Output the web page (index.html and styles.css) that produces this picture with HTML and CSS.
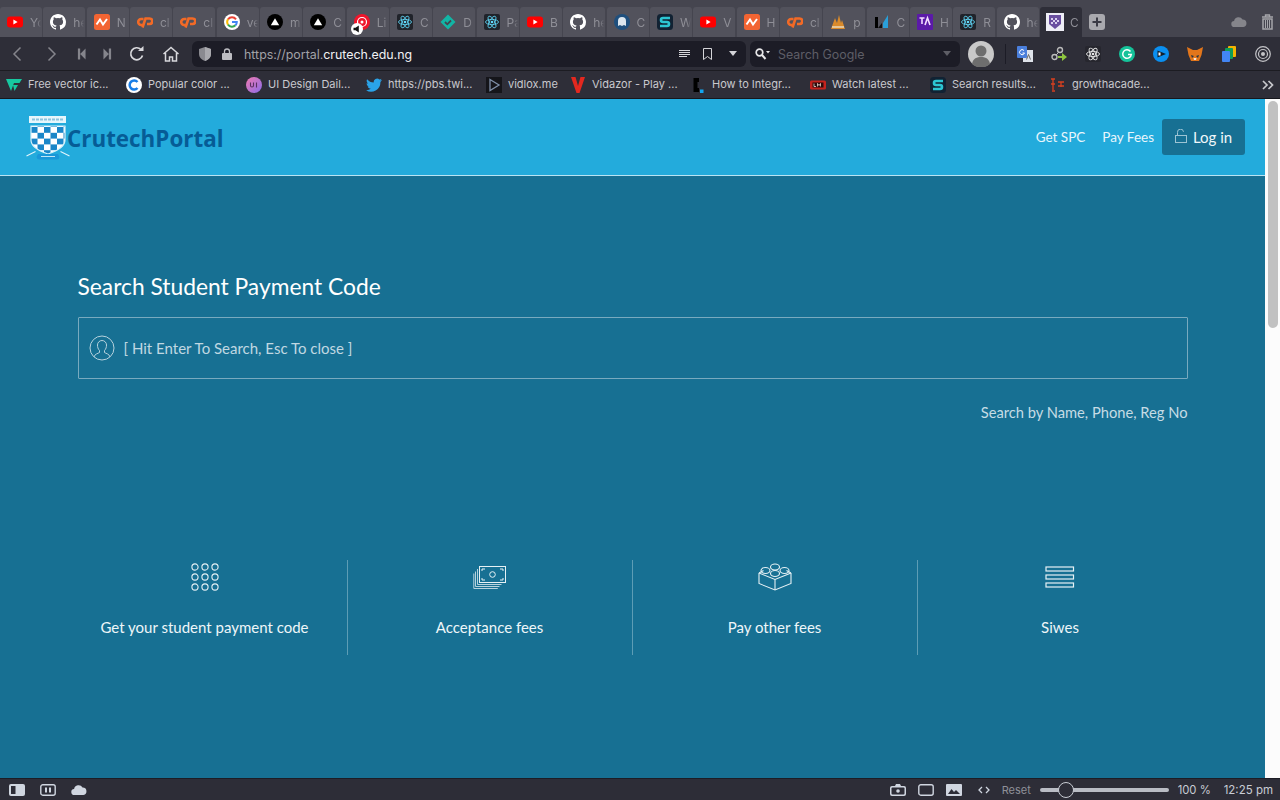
FILE: index.html
```html
<!DOCTYPE html>
<html lang="en">
<head>
    <meta charset="UTF-8">
    <meta name="viewport" content="width=device-width, initial-scale=1.0">
    <title>Crutech Portal</title>
    <link rel="stylesheet" href="styles.css">
</head>
<body>

    <!-- Shared favicon drawings -->
    <svg class="sprites" width="0" height="0">
        <symbol id="yt" viewBox="0 0 16 16"><rect y="2.5" width="16" height="11" rx="3" fill="#f00"/><path d="M6.4 5.5l4.2 2.5-4.2 2.5z" fill="#fff"/></symbol>
        <symbol id="gh" viewBox="0 0 16 16"><path fill-rule="evenodd" fill="#fff" d="M8 0C3.58 0 0 3.58 0 8c0 3.54 2.29 6.53 5.47 7.59.4.07.55-.17.55-.38v-1.34c-2.23.48-2.7-1.07-2.7-1.07-.36-.93-.89-1.17-.89-1.17-.73-.5.05-.49.05-.49.8.06 1.23.83 1.23.83.71 1.23 1.87.87 2.33.66.07-.52.28-.87.51-1.07-1.78-.2-3.64-.89-3.64-3.95 0-.87.31-1.59.82-2.15-.08-.2-.36-1.02.08-2.12 0 0 .67-.21 2.2.82a7.6 7.6 0 0 1 4 0c1.53-1.04 2.2-.82 2.2-.82.44 1.1.16 1.92.08 2.12.51.56.82 1.27.82 2.15 0 3.07-1.87 3.75-3.65 3.95.29.25.54.73.54 1.48v2.2c0 .21.15.46.55.38A8 8 0 0 0 16 8c0-4.42-3.58-8-8-8z"/></symbol>
        <symbol id="nw" viewBox="0 0 16 16"><rect width="16" height="16" rx="2.5" fill="#f26432"/><path d="M2.5 10.500L6 5.500l3 5 4-5.500" fill="none" stroke="#fff" stroke-width="2"/></symbol>
        <symbol id="cp" viewBox="0 0 16 16"><path d="M6.500 5H4.200a3 3 0 0 0 0 6h1.500" fill="none" stroke="#f26a26" stroke-width="2.600"/><path d="M5.500 13.500L8.500 4.500h4a2.700 2.700 0 0 1 0 5.500H10" fill="none" stroke="#f26a26" stroke-width="2.600"/></symbol>
        <symbol id="google" viewBox="0 0 16 16"><circle cx="8" cy="8" r="8" fill="#fff"/><path d="M12 5.300A5 5 0 0 0 4 5.300" fill="none" stroke="#ea4335" stroke-width="2"/><path d="M4 5.300a5 5 0 0 0 0 5.400" fill="none" stroke="#fbbc05" stroke-width="2"/><path d="M4 10.700a5 5 0 0 0 7.500.6" fill="none" stroke="#34a853" stroke-width="2"/><path d="M8 8h4.800a5 5 0 0 1-1.300 3.300" fill="none" stroke="#4285f4" stroke-width="2"/></symbol>
        <symbol id="vercel" viewBox="0 0 16 16"><circle cx="8" cy="8" r="8" fill="#000"/><path d="M8 4.300l4.200 7H3.800z" fill="#fff"/></symbol>
        <symbol id="react" viewBox="0 0 16 16"><rect width="16" height="16" rx="2" fill="#20232a"/><g fill="none" stroke="#61dafb" stroke-width=".8"><ellipse cx="8" cy="8" rx="6.500" ry="2.600"/><ellipse cx="8" cy="8" rx="6.500" ry="2.600" transform="rotate(60 8 8)"/><ellipse cx="8" cy="8" rx="6.500" ry="2.600" transform="rotate(120 8 8)"/></g><circle cx="8" cy="8" r="1.300" fill="#61dafb"/></symbol>
        <symbol id="sflix" viewBox="0 0 16 16"><rect width="16" height="16" rx="3.500" fill="#123"/><path d="M13 4H6a2 2 0 0 0 0 4h4a2 2 0 0 1 0 4H3" fill="none" stroke="#2cc5d2" stroke-width="2.600"/></symbol>
    </svg>

    <!-- Browser tabs -->
    <div class="tabbar">
        <div class="tab"><svg class="fav"><use href="#yt"/></svg><span>Yo</span></div>
        <div class="tab"><svg class="fav"><use href="#gh"/></svg><span>he</span></div>
        <div class="tab"><svg class="fav"><use href="#nw"/></svg><span>N</span></div>
        <div class="tab"><svg class="fav"><use href="#cp"/></svg><span>cl</span></div>
        <div class="tab"><svg class="fav"><use href="#cp"/></svg><span>cl</span></div>
        <div class="tab"><svg class="fav"><use href="#google"/></svg><span>ve</span></div>
        <div class="tab"><svg class="fav"><use href="#vercel"/></svg><span>m</span></div>
        <div class="tab"><svg class="fav"><use href="#vercel"/></svg><span>C</span></div>
        <div class="tab">
            <svg class="fav" viewBox="0 0 16 16"><circle cx="8" cy="8" r="8" fill="#f0152b"/><circle cx="8" cy="8" r="4.500" fill="none" stroke="#fff" stroke-width="1.200"/><circle cx="8" cy="8" r="1.500" fill="#fff"/></svg>
            <span>Li</span>
            <svg class="muted" viewBox="0 0 12 12"><circle cx="6" cy="6" r="6" fill="#fff"/><path d="M2.500 4.800h2L7.800 2.500v7L4.500 7.200h-2z" fill="#111"/></svg>
        </div>
        <div class="tab"><svg class="fav"><use href="#react"/></svg><span>C</span></div>
        <div class="tab"><svg class="fav" viewBox="0 0 16 16"><path d="M8 .5L15.500 8 8 15.500.5 8z" fill="#12b5a5"/><path d="M5 8l2.300 2.300L11 6.500" fill="none" stroke="#45454f" stroke-width="1.800"/></svg><span>D</span></div>
        <div class="tab"><svg class="fav"><use href="#react"/></svg><span>Pa</span></div>
        <div class="tab"><svg class="fav"><use href="#yt"/></svg><span>B</span></div>
        <div class="tab"><svg class="fav"><use href="#gh"/></svg><span>he</span></div>
        <div class="tab"><svg class="fav" viewBox="0 0 16 16"><circle cx="8" cy="8" r="8" fill="#1f4f7d"/><path d="M4 12V7a4 4 0 0 1 8 0v5l-2-1-2 1-2-1z" fill="#dce6ee"/></svg><span>C</span></div>
        <div class="tab"><svg class="fav"><use href="#sflix"/></svg><span>W</span></div>
        <div class="tab"><svg class="fav"><use href="#yt"/></svg><span>V</span></div>
        <div class="tab"><svg class="fav"><use href="#nw"/></svg><span>H</span></div>
        <div class="tab"><svg class="fav"><use href="#cp"/></svg><span>cl</span></div>
        <div class="tab"><svg class="fav" viewBox="0 0 16 16"><path d="M1 15L5 4l2 5 2-8 2 8 1-3 3 9z" fill="#d98a2b"/><path d="M2 13h12" stroke="#e8d9bd" stroke-width="1.500"/></svg><span>p</span></div>
        <div class="tab"><svg class="fav" viewBox="0 0 16 16"><path d="M1 3h3v11H1z" fill="#000"/><path d="M4 14l4-5v5z" fill="#111"/><path d="M9 9l5-8v13H9z" fill="#2a9fd8"/></svg><span>C</span></div>
        <div class="tab"><svg class="fav" viewBox="0 0 16 16"><rect width="16" height="16" rx="1" fill="#5b1aa8"/><path d="M2.500 4h5M5 4v6M8 11l2.500-7L13 11" fill="none" stroke="#f3dcff" stroke-width="1.600"/></svg><span>H</span></div>
        <div class="tab"><svg class="fav"><use href="#react"/></svg><span>R</span></div>
        <div class="tab"><svg class="fav"><use href="#gh"/></svg><span>he</span></div>
        <div class="tab tab-active">
            <svg class="fav fav-large" viewBox="0 0 18 18"><rect width="18" height="18" fill="#eeeef6"/><path d="M3 2h12v9l-6 5-6-5z" fill="#6a4fa0"/><path d="M5 5h2v2H5zm4 0h2v2H9zM7 7h2v2H7zm4 0h2v2h-2zM5 9h2v2H5zm4 0h2v2H9z" fill="#d9d0ee"/></svg>
            <span>C</span>
        </div>
        <div class="new-tab"><svg viewBox="0 0 16 16"><rect width="16" height="16" rx="3" fill="#a9a9ae"/><path d="M8 3.500v9M3.500 8h9" stroke="#3b3b45" stroke-width="2"/></svg></div>
        <div class="tabbar-end">
            <svg class="cloud" viewBox="0 0 16 10"><path d="M3.500 10a3 3 0 0 1-.4-6A4.500 4.500 0 0 1 11.500 2.500 3.800 3.800 0 0 1 12.500 10z" fill="#85858b"/></svg>
            <svg class="trash" viewBox="0 0 13 16"><path d="M1 3h11M4.500 3V1h4v2" fill="none" stroke="#a5a5aa" stroke-width="1.400"/><path d="M2 5h9v10H2z" fill="none" stroke="#a5a5aa" stroke-width="1.500"/><path d="M4.500 6v8M6.500 6v8M8.500 6v8" stroke="#a5a5aa"/></svg>
        </div>
    </div>

    <!-- Browser toolbar -->
    <div class="toolbar">
        <div class="nav-buttons">
            <svg class="nav-icon nav-dim nav-back" viewBox="0 0 12 16"><path d="M9.500 1.500L3 8l6.500 6.500" fill="none" stroke="currentColor" stroke-width="1.500"/></svg>
            <svg class="nav-icon nav-dim nav-forward" viewBox="0 0 12 16"><path d="M2.500 1.500L9 8l-6.500 6.500" fill="none" stroke="currentColor" stroke-width="1.500"/></svg>
            <svg class="nav-icon nav-dim nav-skip" viewBox="0 0 10 12"><path d="M1 0h2.500v12H1zM9.500 0v12L3.500 6z" fill="currentColor"/></svg>
            <svg class="nav-icon nav-dim nav-skip" viewBox="0 0 10 12"><path d="M9 0H6.500v12H9zM.5 0v12l6-6z" fill="currentColor"/></svg>
            <svg class="nav-icon nav-reload" viewBox="0 0 16 16"><path d="M13.500 9.500A6 6 0 1 1 12 3.500" fill="none" stroke="currentColor" stroke-width="1.700"/><path d="M9 5h5.500V0z" fill="currentColor"/></svg>
            <svg class="nav-icon nav-home" viewBox="0 0 18 16"><path d="M1.500 8L9 1.500 16.500 8M3.500 7v8h4v-4h3v4h4V7" fill="none" stroke="currentColor" stroke-width="1.500"/></svg>
        </div>
        <div class="urlbar">
            <svg class="shield" viewBox="0 0 12 14"><path d="M6 0l6 2v5c0 3.500-3 6-6 7-3-1-6-3.500-6-7V2z" fill="#8a8a90"/><path d="M6 0l6 2v5c0 3.500-3 6-6 7z" fill="#a9a9ae"/></svg>
            <svg class="lock" viewBox="0 0 10 12"><path d="M2.500 5V3.500a2.500 2.500 0 0 1 5 0V5" fill="none" stroke="#bdbdc2" stroke-width="1.300"/><rect y="5" width="10" height="7" rx="1" fill="#bdbdc2"/></svg>
            <span class="url">https://portal.<b>crutech.edu.ng</b></span>
            <svg class="reader" viewBox="0 0 11 8"><path d="M0 .5h11M0 2.500h11M0 4.500h11M0 6.500h8" stroke="#d5d5d9"/></svg>
            <svg class="bookmark" viewBox="0 0 9 12"><path d="M.5.500h8v11l-4-3-4 3z" fill="none" stroke="#d5d5d9"/></svg>
            <span class="caret"></span>
        </div>
        <div class="searchbar">
            <svg class="search-glass" viewBox="0 0 15 12"><circle cx="4.500" cy="4.500" r="3.300" fill="none" stroke="#e8e8ea" stroke-width="1.700"/><path d="M7 7l3.500 4" stroke="#e8e8ea" stroke-width="2"/><path d="M11 3h4l-2 2.500z" fill="#e8e8ea"/></svg>
            <span class="search-text">Search Google</span>
            <span class="caret caret-dim"></span>
        </div>
        <div class="avatar"><svg viewBox="0 0 26 26"><circle cx="13" cy="13" r="13" fill="#c9c9c9"/><circle cx="13" cy="10" r="5.500" fill="#6e6e6e"/><path d="M4 23c1-6 5-7 9-7s8 1 9 7a13 13 0 0 1-18 0z" fill="#6e6e6e"/></svg></div>
        <div class="tool-sep"></div>
        <div class="extensions">
            <svg class="ext" viewBox="0 0 16 16"><rect x="6" y="4" width="10" height="12" fill="#dfe3ea"/><rect width="10" height="12" rx="1" fill="#4a7fdc"/><path d="M7 4.500A2.500 2.500 0 1 0 7.500 7H5.500" fill="none" stroke="#fff"/><path d="M9.500 13.500l2-5 2 5" fill="none" stroke="#666"/></svg>
            <svg class="ext" viewBox="0 0 16 16"><circle cx="9" cy="4" r="2.500" fill="none" stroke="#bbb" stroke-width="1.400"/><circle cx="3.500" cy="11" r="2.500" fill="none" stroke="#bbb" stroke-width="1.400"/><path d="M5 9l3-3" stroke="#bbb"/><path d="M7 10h4V7l5 4-5 4v-3H7z" fill="#8ec63f"/></svg>
            <svg class="ext" viewBox="0 0 16 16"><rect width="16" height="16" rx="2" fill="#26262e"/><g fill="none" stroke="#e6e6e6" stroke-width=".9"><ellipse cx="8" cy="8" rx="6.500" ry="2.600"/><ellipse cx="8" cy="8" rx="6.500" ry="2.600" transform="rotate(60 8 8)"/><ellipse cx="8" cy="8" rx="6.500" ry="2.600" transform="rotate(120 8 8)"/></g><circle cx="8" cy="8" r="1.300" fill="#e6e6e6"/></svg>
            <svg class="ext" viewBox="0 0 16 16"><circle cx="8" cy="8" r="8" fill="#15c39a"/><path d="M11.500 5.500A4.300 4.300 0 1 0 12.300 8.500H9" fill="none" stroke="#fff" stroke-width="1.500"/></svg>
            <svg class="ext" viewBox="0 0 16 16"><circle cx="8" cy="8" r="8" fill="#0a8ff0"/><path d="M4.500 4.500L13 8l-8.500 3.500z" fill="#12202c"/><path d="M5.500 6.500h2v3h-2z" fill="#fff"/></svg>
            <svg class="ext" viewBox="0 0 16 16"><path d="M0 1l6 3h4l6-3-1.500 8L12 15H4L1.500 9z" fill="#e2761b"/><path d="M4 9l3 1-2 2zM12 9l-3 1 2 2z" fill="#233447"/><path d="M6.500 12h3l-.5 2H7z" fill="#f5e3d3"/></svg>
            <svg class="ext" viewBox="0 0 16 16"><rect x="7" y="0" width="8" height="11" rx="1" fill="#f4b400"/><rect x="4" y="2" width="8" height="11" rx="1" fill="#0f9d58"/><rect x="1" y="5" width="8" height="11" rx="1" fill="#4285f4"/></svg>
            <svg class="ext" viewBox="0 0 16 16"><circle cx="8" cy="8" r="7.300" fill="none" stroke="#c4c4c8" stroke-width="1.200"/><circle cx="8" cy="8" r="4.500" fill="none" stroke="#c4c4c8" stroke-width="1.200"/><circle cx="8" cy="8" r="2" fill="#c4c4c8"/></svg>
        </div>
    </div>

    <!-- Bookmarks -->
    <div class="bookmarks">
        <div class="bm"><svg class="bm-icon" viewBox="0 0 16 16"><path d="M0 2h16l-2.500 4H8l-3 8z" fill="#17c7a0"/><path d="M7 8h5l-3.500 6z" fill="#17c7a0"/></svg><span>Free vector ic...</span></div>
        <div class="bm"><svg class="bm-icon" viewBox="0 0 16 16"><circle cx="8" cy="8" r="8" fill="#fff"/><path d="M11.500 5A4.500 4.500 0 1 0 11.500 11" fill="none" stroke="#1a7ee6" stroke-width="2.500"/></svg><span>Popular color ...</span></div>
        <div class="bm"><svg class="bm-icon" viewBox="0 0 16 16"><defs><linearGradient id="uiGrad" x1="0" y1="0" x2="1" y2="1"><stop offset="0" stop-color="#f07ab0"/><stop offset="1" stop-color="#8a6ce8"/></linearGradient></defs><circle cx="8" cy="8" r="8" fill="url(#uiGrad)"/><path d="M4.500 5.500v3a1.500 1.500 0 0 0 3 0v-3M10.500 5.500v5" fill="none" stroke="#5a3060" stroke-width="1.100"/></svg><span>UI Design Dail...</span></div>
        <div class="bm"><svg class="bm-icon" viewBox="0 0 16 16"><path d="M16 3.100c-.6.300-1.200.4-1.900.5.700-.4 1.200-1 1.400-1.800-.6.400-1.300.7-2.100.8A3.300 3.300 0 0 0 7.800 5.600C5.100 5.500 2.700 4.200 1.100 2.200c-.9 1.500-.4 3.400 1 4.400-.5 0-1-.2-1.500-.4 0 1.600 1.100 3 2.600 3.300-.5.100-1 .1-1.500 0 .4 1.300 1.600 2.200 3.100 2.300A6.600 6.600 0 0 1 0 13.200 9.300 9.300 0 0 0 14.400 5c.6-.5 1.200-1.100 1.600-1.900z" fill="#2aa3e8"/></svg><span>https://pbs.twi...</span></div>
        <div class="bm bm-short"><svg class="bm-icon" viewBox="0 0 16 16"><rect width="16" height="16" fill="#15151a"/><path d="M4 2.500l9 5.500-9 5.500z" fill="none" stroke="#7f8fa8" stroke-width="1.300"/></svg><span>vidlox.me</span></div>
        <div class="bm"><svg class="bm-icon" viewBox="0 0 16 16"><path d="M1 0h4.500L8 9l2.500-9H15L9.500 16h-3z" fill="#e3281f"/></svg><span>Vidazor - Play ...</span></div>
        <div class="bm"><svg class="bm-icon" viewBox="0 0 16 16"><path d="M9 3H5.500v10H9" fill="none" stroke="#000" stroke-width="4"/><rect x="10" y="12.500" width="3.500" height="3.500" fill="#12a5ef"/></svg><span>How to Integr...</span></div>
        <div class="bm"><svg class="bm-icon" viewBox="0 0 16 16"><rect y="3.500" width="16" height="9" rx="1.500" fill="#c4231d"/><rect x="2.500" y="5.500" width="11" height="5" fill="#2a0c0c"/><path d="M4 6.500v3h2M7.500 9.500v-3l1.500 2 1.500-2v3" fill="none" stroke="#f2d9d0" stroke-width=".8"/></svg><span>Watch latest ...</span></div>
        <div class="bm"><svg class="bm-icon"><use href="#sflix"/></svg><span>Search results...</span></div>
        <div class="bm"><svg class="bm-icon" viewBox="0 0 16 16"><path d="M3 2v11M1 2h4M1 7h4M2 14h3M8 5h6M8 9h6M11 5v5" fill="none" stroke="#d6401f" stroke-width="1.300"/></svg><span>growthacade...</span></div>
        <svg class="bm-more" viewBox="0 0 12 10"><path d="M1 1l4 4-4 4M6.500 1l4 4-4 4" fill="none" stroke="#c8c8cc" stroke-width="1.700"/></svg>
    </div>

    <!-- Page -->
    <div class="viewport">
        <div class="page">
            <header class="site-header">
                <a class="brand">
                    <svg class="crest" viewBox="0 0 44 45">
                        <defs>
                            <pattern id="checks" width="13" height="11.600" patternUnits="userSpaceOnUse" x="5" y="12">
                                <rect width="13" height="11.600" fill="#1a86c8"/>
                                <rect x="6.500" width="6.500" height="5.800" fill="#fff"/>
                                <rect y="5.800" width="6.500" height="5.800" fill="#fff"/>
                            </pattern>
                        </defs>
                        <rect x="3" y="1" width="37" height="7" fill="#e6f6fc"/>
                        <path d="M6 4.500h31" stroke="#8dc3de" stroke-width="2" stroke-dasharray="3 1"/>
                        <path d="M5 11h34v14c0 7-8 11-17 14C13 36 5 32 5 25z" fill="url(#checks)" stroke="#d5f1fb" stroke-width="1.200"/>
                        <path d="M0.500 41l9-4.500M43.500 41l-9-4.500" stroke="#e0f5fc" stroke-width="1.200"/>
                        <path d="M12 39h20l1.500 3a3 3 0 0 1-3 2.500H13.500A3 3 0 0 1 10.500 42z" fill="#1a97d8"/>
                        <path d="M15 41.500h14" stroke="#bfe6f6" stroke-width="1"/>
                    </svg>
                    <span class="brand-name">CrutechPortal</span>
                </a>
                <nav class="site-nav">
                    <a class="nav-link">Get SPC</a>
                    <a class="nav-link">Pay Fees</a>
                    <a class="login-btn">
                        <svg viewBox="0 0 12 14"><path d="M2.500 6V3.500a3 3 0 0 1 6-.7" fill="none" stroke="#9cc3d3"/><rect x=".5" y="6.500" width="11" height="7" fill="none" stroke="#9cc3d3"/></svg>
                        Log in
                    </a>
                </nav>
            </header>

            <main class="content">
                <h1 class="search-title">Search Student Payment Code</h1>
                <div class="search-box">
                    <svg class="user-icon" viewBox="0 0 26 26"><circle cx="13" cy="13" r="12" fill="none" stroke="#b6d2dd"/><path d="M5 22c.5-3 4-3.500 5.500-4.500v-2C9 14 8.500 12 8.500 10a4.500 4.500 0 0 1 9 0c0 2-.5 4-2 5.500v2C17 18.500 20.500 19 21 22" fill="none" stroke="#b6d2dd"/></svg>
                    <span class="search-placeholder">[ Hit Enter To Search, Esc To close ]</span>
                </div>
                <p class="search-hint">Search by Name, Phone, Reg No</p>

                <section class="features">
                    <div class="feature">
                        <svg class="feature-icon" viewBox="0 0 28 28"><g fill="none" stroke="#e6f1f5" stroke-width="1.100"><circle cx="4" cy="4" r="3.100"/><circle cx="14" cy="4" r="3.100"/><circle cx="24" cy="4" r="3.100"/><circle cx="4" cy="14" r="3.100"/><circle cx="14" cy="14" r="3.100"/><circle cx="24" cy="14" r="3.100"/><circle cx="4" cy="24" r="3.100"/><circle cx="14" cy="24" r="3.100"/><circle cx="24" cy="24" r="3.100"/></g></svg>
                        <span>Get your student payment code</span>
                    </div>
                    <div class="feature">
                        <svg class="feature-icon feature-wide" viewBox="0 0 34 24"><g fill="none" stroke="#e6f1f5"><rect x="6.500" y="1.500" width="26" height="16"/><path d="M9 6V4h3M27 4h3v2M9 13v2h3M27 15h3v-2"/><circle cx="19.500" cy="9.500" r="2.800"/></g><path d="M4.500 4v15.500h24M2.500 6.500v15h24M.8 8.500v15h24" fill="none" stroke="#b6d2dd"/></svg>
                        <span>Acceptance fees</span>
                    </div>
                    <div class="feature">
                        <svg class="feature-icon feature-wide" viewBox="0 0 34 28"><g fill="none" stroke="#e6f1f5" stroke-width="1.100"><path d="M1 10v10.500L17 27l16-6.500V10"/><path d="M1 10l16 6.500L33 10"/><path d="M17 16.500V27"/><path d="M1 10l4.500-2.500M33 10l-4.500-2.500"/><ellipse cx="17" cy="4" rx="4.500" ry="3"/><ellipse cx="7.500" cy="7.500" rx="4.500" ry="3"/><ellipse cx="26.500" cy="7.500" rx="4.500" ry="3"/><ellipse cx="17" cy="10.500" rx="4.500" ry="3"/></g></svg>
                        <span>Pay other fees</span>
                    </div>
                    <div class="feature">
                        <svg class="feature-icon feature-list" viewBox="0 0 30 24"><g fill="none" stroke="#e6f1f5" stroke-width="1.200"><rect x="1" y="2" width="27.500" height="4"/><rect x="1" y="10" width="27.500" height="4"/><rect x="1" y="18" width="27.500" height="4"/></g></svg>
                        <span>Siwes</span>
                    </div>
                </section>
            </main>
        </div>
        <div class="scrollbar"><div class="scroll-thumb"></div></div>
    </div>

    <!-- Browser status bar -->
    <div class="statusbar">
        <div class="status-left">
            <svg viewBox="0 0 16 12"><rect width="16" height="12" rx="2" fill="#d0d6e0"/><rect x="2" y="2" width="4.500" height="8" fill="#2d2d37"/></svg>
            <svg viewBox="0 0 16 12"><rect x=".8" y=".8" width="14.400" height="10.400" rx="2" fill="none" stroke="#d0d6e0" stroke-width="1.400"/><path d="M6 3.500v5M10 3.500v5" stroke="#d0d6e0" stroke-width="2"/></svg>
            <svg viewBox="0 0 16 10"><path d="M3.500 10a3 3 0 0 1-.4-6A4.500 4.500 0 0 1 11.500 2.500 3.800 3.800 0 0 1 12.500 10z" fill="#d0d6e0"/></svg>
        </div>
        <div class="status-right">
            <svg class="st-icon" viewBox="0 0 16 12"><path d="M5 2l1-2h4l1 2h3a2 2 0 0 1 2 2v6a2 2 0 0 1-2 2H2a2 2 0 0 1-2-2V4a2 2 0 0 1 2-2z" fill="#d0d6e0"/><rect x="1.500" y="3.500" width="13" height="7" rx="1" fill="#2d2d37"/><circle cx="8" cy="7" r="1.800" fill="#d0d6e0"/></svg>
            <svg class="st-icon" viewBox="0 0 16 12"><rect x=".8" y=".8" width="14.400" height="10.400" rx="2" fill="none" stroke="#d0d6e0" stroke-width="1.400"/></svg>
            <svg class="st-icon" viewBox="0 0 16 12"><rect width="16" height="12" rx="1" fill="#d0d6e0"/><path d="M2 10l3.500-5 2.500 3 2-2 4 4z" fill="#2d2d37"/></svg>
            <svg class="st-code" viewBox="0 0 12 8"><path d="M4 1L1 4l3 3M8 1l3 3-3 3" fill="none" stroke="#d0d6e0" stroke-width="1.300"/></svg>
            <span class="st-reset">Reset</span>
            <div class="zoom-slider"><div class="zoom-knob"></div></div>
            <span class="st-zoom">100 %</span>
            <span class="st-time">12:25 pm</span>
        </div>
    </div>

</body>
</html>
```

FILE: styles.css
```css
* {
    box-sizing: border-box;
}
html, body {
    height: 100%;
}
body {
    margin: 0;
    height: 800px;
    overflow: hidden;
    display: flex;
    flex-direction: column;
    font-family: Inter, "Liberation Sans", sans-serif;
    background-color: #2d2d37;
}
.sprites {
    position: absolute;
}

/* tabs */
.tabbar {
    height: 37px;
    padding-top: 7px;
    display: flex;
    gap: 1.33px;
    background-color: #45454f;
}
.tab {
    position: relative;
    width: 42px;
    height: 30px;
    flex-shrink: 0;
    padding-left: 7px;
    display: flex;
    align-items: center;
    gap: 7px;
    overflow: hidden;
    border-radius: 3px 3px 0 0;
    background-color: #52525c;
    font-size: 12px;
    color: #8f8f97;
}
.tab span {
    width: 11px;
    overflow: hidden;
    white-space: nowrap;
    -webkit-mask-image: linear-gradient(to right, #000 60%, transparent);
    mask-image: linear-gradient(to right, #000 60%, transparent);
}
.tab-active {
    background-color: #2e2e38;
}
.fav {
    width: 16px;
    height: 16px;
    flex-shrink: 0;
}
.fav-large {
    width: 18px;
    height: 18px;
    margin-left: -1px;
    margin-right: -1px;
}
.muted {
    position: absolute;
    left: 4px;
    top: 16px;
    width: 12px;
    height: 12px;
}
.new-tab {
    margin-left: 6px;
    padding-top: 7px;
}
.new-tab svg {
    width: 16px;
    height: 16px;
    display: block;
}
.tabbar-end {
    margin-left: auto;
    padding: 7px 6px 0 0;
    display: flex;
    gap: 14px;
}
.cloud {
    width: 16px;
    height: 16px;
}
.trash {
    width: 13px;
    height: 16px;
}

/* toolbar */
.toolbar {
    height: 33px;
    display: flex;
    align-items: center;
    background-color: #2e2e38;
}
.nav-buttons {
    width: 192px;
    flex-shrink: 0;
    padding-left: 11px;
    display: flex;
    align-items: center;
}
.nav-icon {
    width: 12px;
    height: 16px;
    margin-right: 17px;
    color: #d8d8dc;
}
.nav-dim {
    color: #85858c;
}
.nav-back {
    margin-right: 23px;
}
.nav-forward {
    margin-right: 19px;
}
.nav-skip {
    width: 9px;
    height: 12px;
}
.nav-reload {
    width: 16px;
}
.nav-home {
    width: 18px;
    margin-right: 0;
}
.urlbar {
    width: 554px;
    height: 26px;
    flex-shrink: 0;
    padding: 0 8px 0 7px;
    display: flex;
    align-items: center;
    border-radius: 6px;
    background-color: #1c1c26;
    font-size: 12.4px;
}
.shield {
    width: 12px;
    height: 14px;
    margin-right: 11px;
}
.lock {
    width: 10px;
    height: 12px;
    margin-right: 12px;
}
.url {
    flex: 1;
    padding-top: 1px;
    color: #a2a2a8;
}
.url b {
    font-weight: 400;
    color: #f2f2f4;
}
.reader {
    width: 11px;
    height: 8px;
    margin-right: 13px;
}
.bookmark {
    width: 9px;
    height: 12px;
    margin-right: 17px;
}
.caret {
    width: 0;
    height: 0;
    margin-right: 1px;
    border-left: 4px solid transparent;
    border-right: 4px solid transparent;
    border-top: 5px solid #d5d5d9;
}
.caret-dim {
    border-top-color: #5e5e66;
}
.searchbar {
    width: 210px;
    height: 26px;
    margin-left: 4px;
    flex-shrink: 0;
    padding: 0 8px 0 5px;
    display: flex;
    align-items: center;
    border-radius: 6px;
    background-color: #1c1c26;
    font-size: 12.4px;
}
.search-glass {
    width: 15px;
    height: 12px;
    margin-right: 8px;
}
.search-text {
    flex: 1;
    padding-top: 1px;
    color: #5e5e66;
}
.avatar {
    width: 26px;
    height: 26px;
    margin-left: 8px;
    flex-shrink: 0;
}
.avatar svg {
    display: block;
}
.tool-sep {
    width: 1px;
    height: 20px;
    margin-left: 11px;
    background-color: #1c1c26;
}
.extensions {
    margin-left: 11px;
    display: flex;
    gap: 18px;
}
.ext {
    width: 16px;
    height: 16px;
}

/* bookmarks */
.bookmarks {
    position: relative;
    height: 28px;
    padding-left: 6px;
    display: flex;
    align-items: center;
    border-top: 1px solid #1c1c22;
    background-color: #2e2e38;
}
.bm {
    width: 120px;
    flex-shrink: 0;
    display: flex;
    align-items: center;
    gap: 6px;
    font-size: 11px;
    color: #c9c9ce;
}
.bm span {
    margin-top: -2px;
}
.bm-short {
    width: 84px;
}
.bm-icon {
    width: 16px;
    height: 16px;
    flex-shrink: 0;
}
.bm-more {
    position: absolute;
    right: 6px;
    top: 9px;
    width: 12px;
    height: 10px;
}

/* page */
.viewport {
    flex: 1;
    display: flex;
    min-height: 0;
    border-top: 1px solid #17171d;
}
.page {
    flex: 1;
    min-width: 0;
    background-color: #177093;
    color: #fff;
    font-family: Lato, "Noto Sans", sans-serif;
}
.site-header {
    height: 77px;
    padding: 0 20px 0 26px;
    display: flex;
    align-items: center;
    justify-content: space-between;
    border-bottom: 1px solid #b8e4f4;
    background-color: #23abdc;
}
.brand {
    display: flex;
    align-items: center;
}
.crest {
    width: 44px;
    height: 45px;
}
.brand-name {
    margin: 2px 0 0 -3px;
    font-family: "Open Sans", sans-serif;
    font-size: 22.4px;
    font-weight: 700;
    color: #065c96;
}
.site-nav {
    display: flex;
    align-items: center;
    font-size: 13.5px;
}
.nav-link {
    margin-right: 17px;
    color: #e8f6fc;
}
.nav-link:nth-child(2) {
    margin-right: 8px;
}
.login-btn {
    width: 83px;
    height: 36px;
    display: flex;
    align-items: center;
    justify-content: center;
    gap: 6px;
    border-radius: 3px;
    background-color: #177093;
    font-size: 15px;
    color: #f0f7fa;
}
.login-btn svg {
    width: 12px;
    height: 14px;
    margin-top: -2px;
}
.content {
    width: 1140px;
    margin: 0 auto;
    padding-top: 95px;
}
.search-title {
    margin: 0 15px;
    font-size: 22.8px;
    line-height: 30px;
    font-weight: 400;
    color: #fff;
}
.search-box {
    height: 62px;
    margin: 16px 15px 0;
    padding-left: 10px;
    display: flex;
    align-items: center;
    border: 1px solid #78aabf;
    border-radius: 1px;
}
.user-icon {
    width: 26px;
    height: 26px;
    margin-right: 9px;
}
.search-placeholder {
    font-size: 15px;
    color: #c0d8e2;
}
.search-hint {
    margin: 23px 15px 0;
    text-align: right;
    font-size: 14.7px;
    line-height: 20px;
    color: #c6dce5;
}
.features {
    margin-top: 138px;
    display: grid;
    grid-template-columns: repeat(4, 285px);
}
.feature {
    height: 95px;
    padding-top: 3px;
    display: flex;
    flex-direction: column;
    align-items: center;
    border-right: 1px solid #5d9db5;
    font-size: 15px;
    color: #eef6f9;
}
.feature:last-child {
    border-right: none;
}
.feature span {
    margin-top: 26px;
    line-height: 20px;
}
.feature-icon {
    width: 28px;
    height: 28px;
}
.feature-wide {
    width: 34px;
}
.feature-list {
    width: 30px;
}
.scrollbar {
    width: 15px;
    flex-shrink: 0;
    padding: 2px 2px 0 3px;
    background-color: #fcfcfc;
}
.scroll-thumb {
    height: 227px;
    border-radius: 5px;
    background-color: #c1c1c1;
}

/* status bar */
.statusbar {
    height: 22px;
    padding: 0 7px 0 9px;
    display: flex;
    align-items: center;
    justify-content: space-between;
    border-top: 1px solid #1d1d25;
    background-color: #2d2d37;
    font-size: 11px;
}
.status-left {
    display: flex;
    align-items: center;
    gap: 15px;
}
.status-left svg {
    width: 16px;
    height: 12px;
}
.status-right {
    display: flex;
    align-items: center;
    color: #c8ccd4;
}
.st-icon {
    width: 16px;
    height: 12px;
    margin-right: 12px;
}
.st-code {
    width: 12px;
    height: 8px;
    margin: 0 12px 0 4px;
}
.st-reset {
    width: 38px;
    color: #8f9099;
}
.zoom-slider {
    position: relative;
    width: 129px;
    height: 4px;
    border-radius: 2px;
    margin-right: 9px;
    background-color: #b9bcc4;
}
.zoom-knob {
    position: absolute;
    left: 18px;
    top: -6px;
    width: 16px;
    height: 16px;
    border: 1px solid #c8ccd4;
    border-radius: 50%;
    background-color: #2d2d37;
}
.st-zoom {
    width: 46px;
    font-size: 11.3px;
}
.st-time {
    font-size: 11.5px;
}
```
